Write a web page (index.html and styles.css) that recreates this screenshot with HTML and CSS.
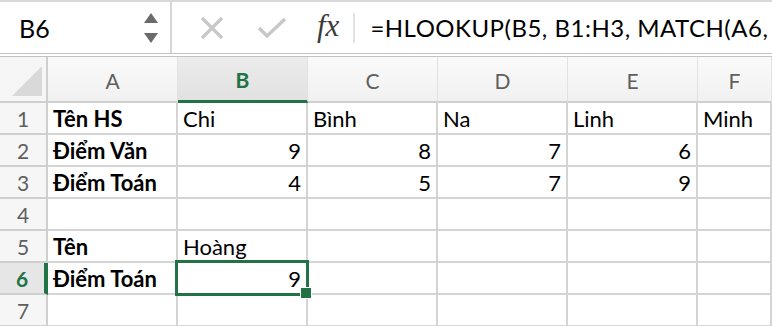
FILE: index.html
```html
<!DOCTYPE html>
<html lang="vi">
<head>
    <meta charset="UTF-8">
    <title>HLOOKUP</title>
    <link rel="stylesheet" href="styles.css">
</head>
<body>
    <div class="formula-bar">
        <div class="name-box">
            <span class="cell-ref">B6</span>
            <span class="spinner">
                <svg width="14" height="10" viewBox="0 0 14 10"><polygon points="7,0 14,10 0,10" fill="#6b6b6b"/></svg>
                <svg width="14" height="10" viewBox="0 0 14 10"><polygon points="0,0 14,0 7,10" fill="#6b6b6b"/></svg>
            </span>
        </div>
        <div class="formula-tools">
            <svg class="tool" width="24" height="24" viewBox="0 0 24 24"><path d="M2 2 L22 22 M22 2 L2 22" stroke="#c8c8c8" stroke-width="3.2" fill="none"/></svg>
            <svg class="tool" width="28" height="22" viewBox="0 0 28 22"><path d="M1 11 L9 19 L27 2" stroke="#c8c8c8" stroke-width="3.4" fill="none"/></svg>
            <span class="fx">fx</span>
            <span class="divider"></span>
            <span class="formula">=HLOOKUP(B5, B1:H3, MATCH(A6,</span>
        </div>
    </div>

    <div class="sheet">
        <div class="corner"><svg width="30" height="30" viewBox="0 0 30 30"><polygon points="30,0 30,30 0,30" fill="#d9d9d9"/></svg></div>
        <div class="col-head">A</div>
        <div class="col-head active">B</div>
        <div class="col-head">C</div>
        <div class="col-head">D</div>
        <div class="col-head">E</div>
        <div class="col-head">F</div>

        <div class="row-head">1</div>
        <div class="cell bold">Tên HS</div>
        <div class="cell">Chi</div>
        <div class="cell">Bình</div>
        <div class="cell">Na</div>
        <div class="cell">Linh</div>
        <div class="cell">Minh</div>

        <div class="row-head">2</div>
        <div class="cell bold">Điểm Văn</div>
        <div class="cell num">9</div>
        <div class="cell num">8</div>
        <div class="cell num">7</div>
        <div class="cell num">6</div>
        <div class="cell"></div>

        <div class="row-head">3</div>
        <div class="cell bold">Điểm Toán</div>
        <div class="cell num">4</div>
        <div class="cell num">5</div>
        <div class="cell num">7</div>
        <div class="cell num">9</div>
        <div class="cell"></div>

        <div class="row-head">4</div>
        <div class="cell"></div>
        <div class="cell"></div>
        <div class="cell"></div>
        <div class="cell"></div>
        <div class="cell"></div>
        <div class="cell"></div>

        <div class="row-head">5</div>
        <div class="cell bold">Tên</div>
        <div class="cell">Hoàng</div>
        <div class="cell"></div>
        <div class="cell"></div>
        <div class="cell"></div>
        <div class="cell"></div>

        <div class="row-head active">6</div>
        <div class="cell bold">Điểm Toán</div>
        <div class="cell num selected">9</div>
        <div class="cell"></div>
        <div class="cell"></div>
        <div class="cell"></div>
        <div class="cell"></div>

        <div class="row-head">7</div>
        <div class="cell"></div>
        <div class="cell"></div>
        <div class="cell"></div>
        <div class="cell"></div>
        <div class="cell"></div>
        <div class="cell"></div>
    </div>
</body>
</html>
```

FILE: styles.css
```css
* {
    box-sizing: border-box;
}
body {
    margin: 0;
    width: 772px;
    height: 326px;
    overflow: hidden;
    font-family: Lato, "Open Sans", sans-serif;
    color: #000;
    background: #fff;
}

/* formula bar */
.formula-bar {
    display: flex;
    height: 54px;
    border-top: 2px solid #d9d9d9;
    border-bottom: 1px solid #c2c2c2;
    white-space: nowrap;
    overflow: hidden;
}
.name-box {
    width: 172px;
    flex: none;
    display: flex;
    align-items: center;
    border-right: 2px solid #d6d6d6;
    padding-left: 19px;
}
.cell-ref {
    font-size: 25px;
    flex: 1;
}
.spinner {
    display: flex;
    flex-direction: column;
    gap: 10px;
    margin-right: 12px;
}
.spinner svg {
    display: block;
}
.formula-tools {
    display: flex;
    align-items: center;
    padding-left: 28px;
}
.tool {
    margin-right: 34px;
}
.fx {
    font-family: "Liberation Serif", serif;
    font-style: italic;
    font-size: 31px;
    color: #3c3c3c;
    margin-left: -3px;
    margin-bottom: 4px;
}
.divider {
    width: 2px;
    height: 30px;
    background: #e2e2e2;
    margin: 0 15px 0 14px;
}
.formula {
    font-size: 24px;
    letter-spacing: 0.5px;
}

/* grid */
.sheet {
    position: relative;
    display: grid;
    grid-template-columns: 48px repeat(5, 130px) 1fr;
    grid-template-rows: 46px repeat(7, 32px);
    border-top: 1px solid #c2c2c2;
    margin-top: 2px;
}
.corner {
    display: flex;
    align-items: flex-end;
    padding: 0 0 5px 12px;
    background: #f6f6f6;
    border-right: 2px solid #cfcfcf;
    border-bottom: 2px solid #cfcfcf;
}
.corner svg {
    display: block;
}
.col-head {
    display: flex;
    align-items: center;
    justify-content: center;
    background: linear-gradient(#fafafa, #f1f1f1);
    border-right: 1px solid #e2e2e2;
    border-bottom: 2px solid #cfcfcf;
    color: #5f5f5f;
    font-size: 21px;
    padding-top: 2px;
}
.col-head.active {
    background: linear-gradient(#ececec, #e1e1e1);
    border-bottom: 3px solid #217346;
    color: #217346;
    font-weight: bold;
}
.row-head {
    display: flex;
    align-items: center;
    justify-content: center;
    background: #f6f6f6;
    border-right: 2px solid #cfcfcf;
    border-bottom: 2px solid #cfcfcf;
    color: #5f5f5f;
    font-size: 21px;
}
.row-head.active {
    background: #e6e6e6;
    border-right: 4px solid #217346;
    color: #217346;
    font-weight: bold;
}
.cell {
    display: flex;
    align-items: center;
    padding: 0 5px;
    border-right: 2px solid #d4d4d4;
    border-bottom: 2px solid #d4d4d4;
    font-size: 22px;
    white-space: nowrap;
    overflow: hidden;
}
.cell.bold {
    font-weight: bold;
}
.cell.num {
    justify-content: flex-end;
}
.cell.selected {
    position: relative;
    overflow: visible;
}
.cell.selected::before {
    content: "";
    position: absolute;
    left: -3px;
    top: -3px;
    right: -3px;
    bottom: -3px;
    border: 3px solid #217346;
}
.cell.selected::after {
    content: "";
    position: absolute;
    right: -6px;
    bottom: -6px;
    width: 10px;
    height: 10px;
    background: #217346;
    border: 1px solid #fff;
    box-sizing: content-box;
}
```
